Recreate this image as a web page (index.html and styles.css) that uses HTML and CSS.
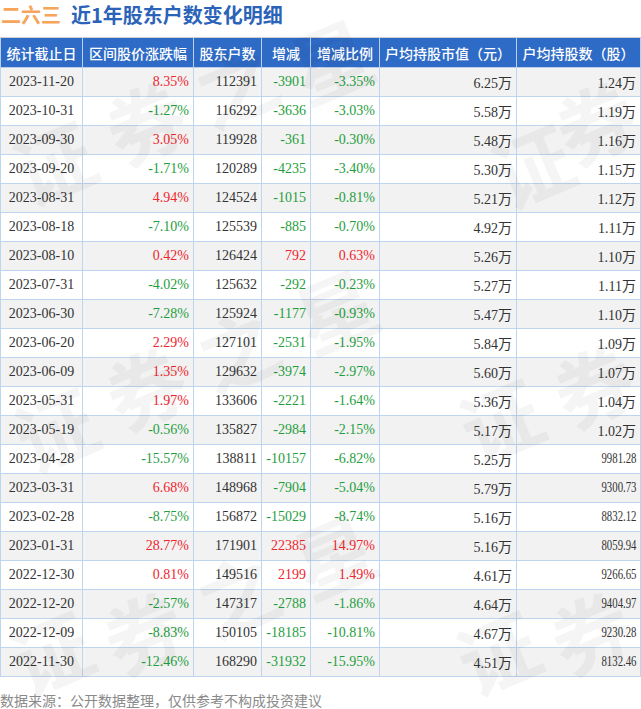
FILE: index.html
```html
<!DOCTYPE html>
<html lang="zh-CN">
<head>
<meta charset="utf-8">
<title>二六三 近1年股东户数变化明细</title>
<link rel="stylesheet" href="styles.css">
</head>
<body>
<div class="page">
  <h1 class="title"><span class="stock">二六三</span><span class="heading">近1年股东户数变化明细</span></h1>
  <table class="data">
    <colgroup>
      <col class="c1"><col class="c2"><col class="c3"><col class="c4"><col class="c5"><col class="c6"><col class="c7">
    </colgroup>
    <thead>
      <tr><th>统计截止日</th><th>区间股价涨跌幅</th><th>股东户数</th><th>增减</th><th>增减比例</th><th>户均持股市值（元）</th><th>户均持股数（股）</th></tr>
    </thead>
    <tbody>
      <tr><td class="date">2023-11-20</td><td class="up">8.35%</td><td>112391</td><td class="down">-3901</td><td class="down">-3.35%</td><td>6.25万</td><td>1.24万</td></tr>
      <tr><td class="date">2023-10-31</td><td class="down">-1.27%</td><td>116292</td><td class="down">-3636</td><td class="down">-3.03%</td><td>5.58万</td><td>1.19万</td></tr>
      <tr><td class="date">2023-09-30</td><td class="up">3.05%</td><td>119928</td><td class="down">-361</td><td class="down">-0.30%</td><td>5.48万</td><td>1.16万</td></tr>
      <tr><td class="date">2023-09-20</td><td class="down">-1.71%</td><td>120289</td><td class="down">-4235</td><td class="down">-3.40%</td><td>5.30万</td><td>1.15万</td></tr>
      <tr><td class="date">2023-08-31</td><td class="up">4.94%</td><td>124524</td><td class="down">-1015</td><td class="down">-0.81%</td><td>5.21万</td><td>1.12万</td></tr>
      <tr><td class="date">2023-08-18</td><td class="down">-7.10%</td><td>125539</td><td class="down">-885</td><td class="down">-0.70%</td><td>4.92万</td><td>1.11万</td></tr>
      <tr><td class="date">2023-08-10</td><td class="up">0.42%</td><td>126424</td><td class="up">792</td><td class="up">0.63%</td><td>5.26万</td><td>1.10万</td></tr>
      <tr><td class="date">2023-07-31</td><td class="down">-4.02%</td><td>125632</td><td class="down">-292</td><td class="down">-0.23%</td><td>5.27万</td><td>1.11万</td></tr>
      <tr><td class="date">2023-06-30</td><td class="down">-7.28%</td><td>125924</td><td class="down">-1177</td><td class="down">-0.93%</td><td>5.47万</td><td>1.10万</td></tr>
      <tr><td class="date">2023-06-20</td><td class="up">2.29%</td><td>127101</td><td class="down">-2531</td><td class="down">-1.95%</td><td>5.84万</td><td>1.09万</td></tr>
      <tr><td class="date">2023-06-09</td><td class="up">1.35%</td><td>129632</td><td class="down">-3974</td><td class="down">-2.97%</td><td>5.60万</td><td>1.07万</td></tr>
      <tr><td class="date">2023-05-31</td><td class="up">1.97%</td><td>133606</td><td class="down">-2221</td><td class="down">-1.64%</td><td>5.36万</td><td>1.04万</td></tr>
      <tr><td class="date">2023-05-19</td><td class="down">-0.56%</td><td>135827</td><td class="down">-2984</td><td class="down">-2.15%</td><td>5.17万</td><td>1.02万</td></tr>
      <tr><td class="date">2023-04-28</td><td class="down">-15.57%</td><td>138811</td><td class="down">-10157</td><td class="down">-6.82%</td><td>5.25万</td><td><span class="narrow">9981.28</span></td></tr>
      <tr><td class="date">2023-03-31</td><td class="up">6.68%</td><td>148968</td><td class="down">-7904</td><td class="down">-5.04%</td><td>5.79万</td><td><span class="narrow">9300.73</span></td></tr>
      <tr><td class="date">2023-02-28</td><td class="down">-8.75%</td><td>156872</td><td class="down">-15029</td><td class="down">-8.74%</td><td>5.16万</td><td><span class="narrow">8832.12</span></td></tr>
      <tr><td class="date">2023-01-31</td><td class="up">28.77%</td><td>171901</td><td class="up">22385</td><td class="up">14.97%</td><td>5.16万</td><td><span class="narrow">8059.94</span></td></tr>
      <tr><td class="date">2022-12-30</td><td class="up">0.81%</td><td>149516</td><td class="up">2199</td><td class="up">1.49%</td><td>4.61万</td><td><span class="narrow">9266.65</span></td></tr>
      <tr><td class="date">2022-12-20</td><td class="down">-2.57%</td><td>147317</td><td class="down">-2788</td><td class="down">-1.86%</td><td>4.64万</td><td><span class="narrow">9404.97</span></td></tr>
      <tr><td class="date">2022-12-09</td><td class="down">-8.83%</td><td>150105</td><td class="down">-18185</td><td class="down">-10.81%</td><td>4.67万</td><td><span class="narrow">9230.28</span></td></tr>
      <tr><td class="date">2022-11-30</td><td class="down">-12.46%</td><td>168290</td><td class="down">-31932</td><td class="down">-15.95%</td><td>4.51万</td><td><span class="narrow">8132.46</span></td></tr>
    </tbody>
  </table>
  <p class="source">数据来源：公开数据整理，仅供参考不构成投资建议</p>
  <div class="watermarks" aria-hidden="true">
    <span class="wm w1">证</span>
    <span class="wm w2">券</span>
    <span class="wm w3">之</span>
    <span class="wm w4">星</span>
    <span class="wm w5">证</span>
    <span class="wm w6">券</span>
    <span class="wm w7">之</span>
    <span class="wm w8">星</span>
    <span class="wm w9">证</span>
    <span class="wm w10">券</span>
    <span class="wm w11">之</span>
    <span class="wm w12">星</span>
    <span class="wm w13">证</span>
    <span class="wm w14">券</span>
    <span class="wm w15">证</span>
    <span class="wm w16">券</span>
    <span class="wm w17">证</span>
    <span class="wm w18">券</span>
  </div>
</div>
</body>
</html>
```

FILE: styles.css
```css
html, body {
  margin: 0;
  padding: 0;
  background: #ffffff;
}

.page {
  position: relative;
  width: 641px;
  height: 709px;
  overflow: hidden;
  font-family: "Noto Sans CJK SC", "Noto Sans", sans-serif;
}

.title {
  margin: 0;
  height: 37px;
  padding: 0 0 0 1px;
  box-sizing: border-box;
  font-size: 20px;
  font-weight: bold;
  line-height: 29px;
  display: flex;
  align-items: flex-start;
  gap: 10px;
}

.stock {
  color: #f6a55a;
}

.heading {
  color: #2b63b8;
}

.data {
  border-collapse: collapse;
  table-layout: fixed;
  width: 640px;
  border: 1px solid #cfcfcf;
}

.c1 { width: 82px; }
.c2 { width: 111px; }
.c3 { width: 68px; }
.c4 { width: 49px; }
.c5 { width: 69px; }
.c6 { width: 137px; }
.c7 { width: 124px; }

.data th {
  background: #2e6bc6;
  color: #ffffff;
  font-size: 14px;
  font-weight: 500;
  height: 29px;
  padding: 0;
  text-align: center;
  white-space: nowrap;
  border: 1px solid #b9cfee;
  border-top-color: #cfcfcf;
}

.data td {
  height: 28px;
  padding: 0 4px 0 0;
  border: 1px solid #bfd4ee;
  font-family: "Liberation Serif", "Noto Sans CJK SC", serif;
  font-size: 14px;
  color: #333333;
  text-align: right;
  white-space: nowrap;
}

.data tbody tr:nth-child(odd) td {
  background: #f2f2f2;
}

.data tbody tr:nth-child(even) td {
  background: #ffffff;
}

.data td.date {
  text-align: center;
  padding: 0;
}

.data td.up {
  color: #f0262e;
}

.data td.down {
  color: #1f9e3e;
}

.narrow {
  display: inline-block;
  transform: scaleX(0.77);
  transform-origin: right center;
}

.source {
  margin: 13px 0 0 0;
  font-size: 14px;
  line-height: 20px;
  color: #8a8a8a;
}

.watermarks {
  position: absolute;
  inset: 0;
  pointer-events: none;
}

.wm {
  position: absolute;
  width: 84px;
  height: 118px;
  margin: -19px 0 0 -2px;
  font-size: 80px;
  line-height: 118px;
  text-align: center;
  font-weight: bold;
  color: rgba(0, 0, 0, 0.04);
  transform: rotate(-23deg);
}

.w1  { left: 13px;  top: 120px; }
.w2  { left: 105px; top: 80px; }
.w3  { left: 195px; top: 42px; }
.w4  { left: 290px; top: 18px; }
.w5  { left: 15px;  top: 387px; }
.w6  { left: 105px; top: 345px; }
.w7  { left: 197px; top: 307px; }
.w8  { left: 295px; top: 268px; }
.w9  { left: 10px;  top: 610px; }
.w10 { left: 103px; top: 590px; }
.w11 { left: 197px; top: 552px; }
.w12 { left: 293px; top: 513px; }
.w13 { left: 491px; top: 123px; }
.w14 { left: 555px; top: 80px; }
.w15 { left: 460px; top: 378px; }
.w16 { left: 553px; top: 343px; }
.w17 { left: 457px; top: 610px; }
.w18 { left: 550px; top: 590px; }
```
